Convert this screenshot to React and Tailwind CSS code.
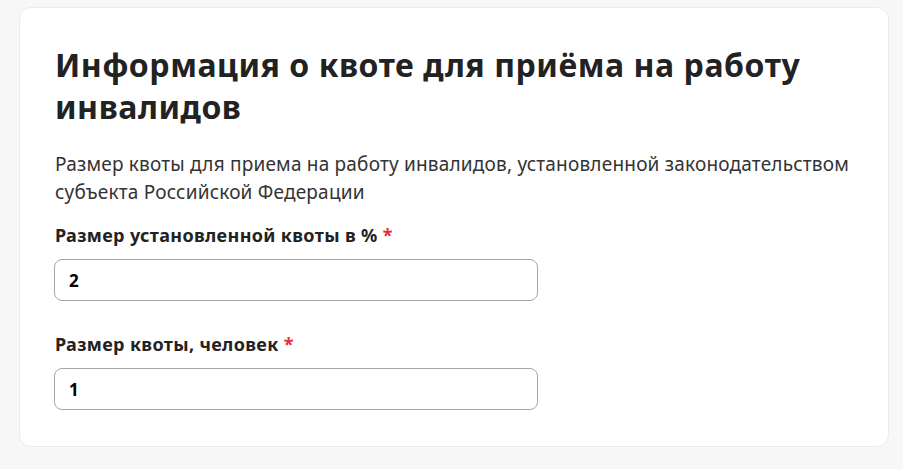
import { useState } from 'react';

const Field = ({ label, value, onChange }) => (
    <div className="flex flex-col">
        <label className="text-[18px] leading-[24px] font-bold text-[#222] tracking-[0.35px]">
            {label} <span className="text-[#e0303a]">*</span>
        </label>
        <input
            value={value}
            onChange={(e) => onChange(e.target.value)}
            className="mt-[12px] -ml-px w-[484px] h-[42px] px-[14px] rounded-[8px] border border-[#a6a6a6] bg-white text-[17px] font-bold text-black outline-none"
            style={{ fontFamily: '"Open Sans", sans-serif' }}
        />
    </div>
);

const App = () => {
    const [percent, setPercent] = useState('2');
    const [people, setPeople] = useState('1');

    return (
        <div className="w-full min-h-[469px] bg-[#f7f7f7] pt-[7px] pl-[19px] pr-[14px] pb-[23px] font-['Noto_Sans',sans-serif]">
            <section className="bg-white border border-[#ebebeb] rounded-[12px] h-[440px] pl-[35px] pr-[30px] pt-[36px]">
                {/* Header */}
                <h1 className="text-[32px] leading-[42px] font-bold text-[#222] tracking-[0.55px]">
                    Информация о квоте для приёма на работу инвалидов
                </h1>
                <p className="mt-[22px] text-[19px] leading-[28px] text-[#333] tracking-[0.2px]">
                    Размер квоты для приема на работу инвалидов, установленной законодательством субъекта Российской Федерации
                </p>

                {/* Fields */}
                <div className="mt-[17px] flex flex-col gap-[31px]">
                    <Field label="Размер установленной квоты в %" value={percent} onChange={setPercent} />
                    <Field label="Размер квоты, человек" value={people} onChange={setPeople} />
                </div>
            </section>
        </div>
    );
};

export default App;
